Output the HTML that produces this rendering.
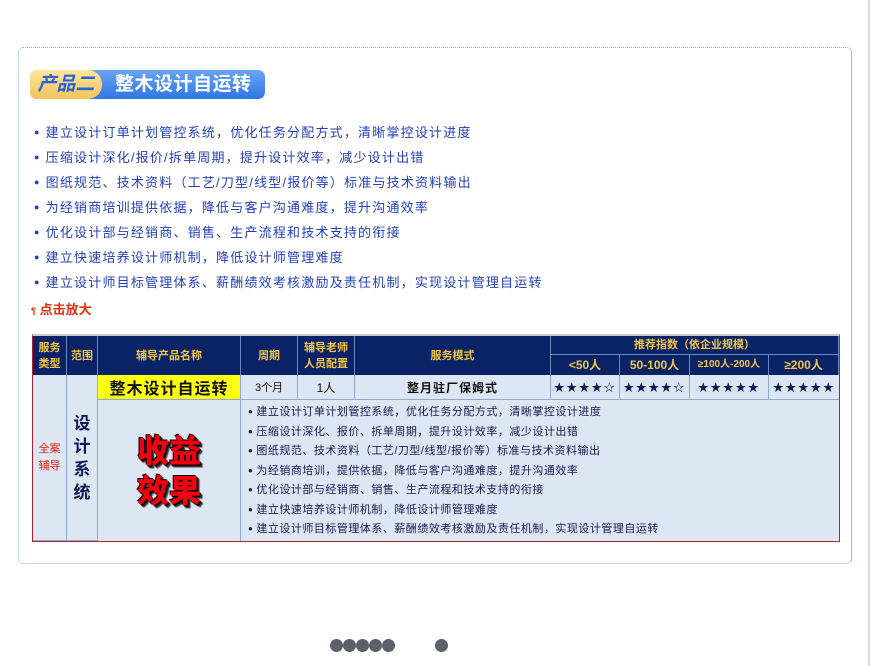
<!DOCTYPE html>
<html><head><meta charset="utf-8"><style>
*{margin:0;padding:0;box-sizing:border-box}
body{width:870px;height:666px;background:#fff;position:relative;overflow:hidden;font-family:"Liberation Sans","Noto Sans CJK SC",sans-serif}
.a{position:absolute}
.card{left:18px;top:47px;width:834px;height:517px;border:1px dotted #8fb0e0;border-right:1px solid #9cb8e8;border-radius:5px}
.badge{left:30px;top:70px;width:235px;height:29px;border-radius:7px;background:linear-gradient(#6aa4f4,#2f76e6);}
.badge .y{position:absolute;left:0;top:0;width:72px;height:29px;border-radius:7px 14px 14px 7px;background:linear-gradient(#ffe7a0,#f2c35a);color:#2a62d8;font-style:italic;font-weight:bold;font-size:19px;line-height:29px;text-align:center}
.badge .t{position:absolute;left:85px;top:0;color:#fff;font-weight:bold;font-size:19px;line-height:29px;letter-spacing:0.5px}
ul.l{left:34px;top:122px;list-style:none;color:#2340b8;font-size:13px;letter-spacing:1.2px;white-space:nowrap}
ul.l li{height:25px;line-height:20px}
ul.l li:before{content:"●";font-size:9px;margin-right:5px;vertical-align:2px}
.zoom{left:31px;top:299px;color:#e03010;font-weight:bold;font-size:13px}
.tb{left:32px;top:334px;width:808px;height:208px;background:#dde6f3;border:1px solid #b02030;border-top:2px solid #c8ccd4}
.h{background:#0a2266;color:#f4c640;font-weight:bold;font-size:11px;text-align:center;display:flex;align-items:center;justify-content:center;line-height:16px;border-right:1px solid #6c88c0;position:absolute}
.c{position:absolute;display:flex;align-items:center;justify-content:center;border-right:1px solid #8fa8d8;border-bottom:1px solid #8fa8d8;font-size:11px;color:#111}
.st{font-size:11px;letter-spacing:1.5px;color:#0a1a50}
.dl{left:248px;top:402px;font-size:11px;letter-spacing:0.5px;color:#1a1a50;list-style:none;white-space:nowrap}
.dl li{height:19.5px;line-height:19px}
.dl li:before{content:"●";font-size:8px;margin-right:3px;vertical-align:1px}
.dot{position:absolute;top:639px;width:13px;height:13px;border-radius:50%;background:#5c606a}
</style></head><body>
<div class="a" style="left:868px;top:0;width:2px;height:666px;background:#ddd"></div>
<div class="a card"></div>
<div class="a badge"><div class="y">产品二</div><div class="t">整木设计自运转</div></div>
<ul class="a l">
<li>建立设计订单计划管控系统，优化任务分配方式，清晰掌控设计进度</li>
<li>压缩设计深化/报价/拆单周期，提升设计效率，减少设计出错</li>
<li>图纸规范、技术资料（工艺/刀型/线型/报价等）标准与技术资料输出</li>
<li>为经销商培训提供依据，降低与客户沟通难度，提升沟通效率</li>
<li>优化设计部与经销商、销售、生产流程和技术支持的衔接</li>
<li>建立快速培养设计师机制，降低设计师管理难度</li>
<li>建立设计师目标管理体系、薪酬绩效考核激励及责任机制，实现设计管理自运转</li>
</ul>
<div class="a zoom"><span style="font-size:9px">¶</span> 点击放大</div>
<div class="a tb"></div>
<div class="h" style="left:33px;top:336px;width:34px;height:39px">服务<br>类型</div>
<div class="h" style="left:67px;top:336px;width:31px;height:39px">范围</div>
<div class="h" style="left:98px;top:336px;width:143px;height:39px">辅导产品名称</div>
<div class="h" style="left:241px;top:336px;width:57px;height:39px">周期</div>
<div class="h" style="left:298px;top:336px;width:57px;height:39px">辅导老师<br>人员配置</div>
<div class="h" style="left:355px;top:336px;width:196px;height:39px">服务模式</div>
<div class="h" style="left:551px;top:336px;width:288px;height:19px;border-bottom:1px solid #6c88c0">推荐指数（依企业规模）</div>
<div class="h" style="left:551px;top:355px;width:69px;height:20px;font-size:12px">&lt;50人</div>
<div class="h" style="left:620px;top:355px;width:70px;height:20px;font-size:12px">50-100人</div>
<div class="h" style="left:690px;top:355px;width:79px;height:20px;font-size:10px">≥100人-200人</div>
<div class="h" style="left:769px;top:355px;width:70px;height:20px;font-size:12px">≥200人</div>
<div class="c" style="left:33px;top:375px;width:34px;height:166px;color:#e02010;font-size:11px;line-height:17px;text-align:center">全案<br>辅导</div>
<div class="c" style="left:67px;top:375px;width:31px;height:166px;font-weight:bold;font-size:17px;line-height:23px;text-align:center;color:#0a1a50">设<br>计<br>系<br>统</div>
<div class="c" style="left:98px;top:375px;width:143px;height:25px;background:#ffff10;font-weight:bold;font-size:16px;letter-spacing:1px">整木设计自运转</div>
<div class="c" style="left:241px;top:375px;width:57px;height:25px">3个月</div>
<div class="c" style="left:298px;top:375px;width:57px;height:25px;font-size:12px">1人</div>
<div class="c" style="left:355px;top:375px;width:196px;height:25px;font-size:12px;font-weight:bold;letter-spacing:1px">整月驻厂保姆式</div>
<div class="c st" style="left:551px;top:375px;width:69px;height:25px">★★★★☆</div>
<div class="c st" style="left:620px;top:375px;width:70px;height:25px">★★★★☆</div>
<div class="c st" style="left:690px;top:375px;width:79px;height:25px">★★★★★</div>
<div class="c st" style="left:769px;top:375px;width:70px;height:25px;border-right:none">★★★★★</div>
<div class="c" style="left:98px;top:400px;width:143px;height:141px;border-bottom:none;color:#f00010;font-weight:900;font-size:32px;line-height:40px;text-align:center;text-shadow:-1px -1px 0 #000,1px 1px 0 #000,2px 2px 0 #222,3px 3px 1px #444">收益<br>效果</div>
<ul class="a dl">
<li>建立设计订单计划管控系统，优化任务分配方式，清晰掌控设计进度</li>
<li>压缩设计深化、报价、拆单周期，提升设计效率，减少设计出错</li>
<li>图纸规范、技术资料（工艺/刀型/线型/报价等）标准与技术资料输出</li>
<li>为经销商培训，提供依据，降低与客户沟通难度，提升沟通效率</li>
<li>优化设计部与经销商、销售、生产流程和技术支持的衔接</li>
<li>建立快速培养设计师机制，降低设计师管理难度</li>
<li>建立设计师目标管理体系、薪酬绩效考核激励及责任机制，实现设计管理自运转</li>
</ul>
<div class="dot" style="left:330px"></div><div class="dot" style="left:343px"></div><div class="dot" style="left:356px"></div><div class="dot" style="left:369px"></div><div class="dot" style="left:382px"></div><div class="dot" style="left:435px"></div>
</body></html>
